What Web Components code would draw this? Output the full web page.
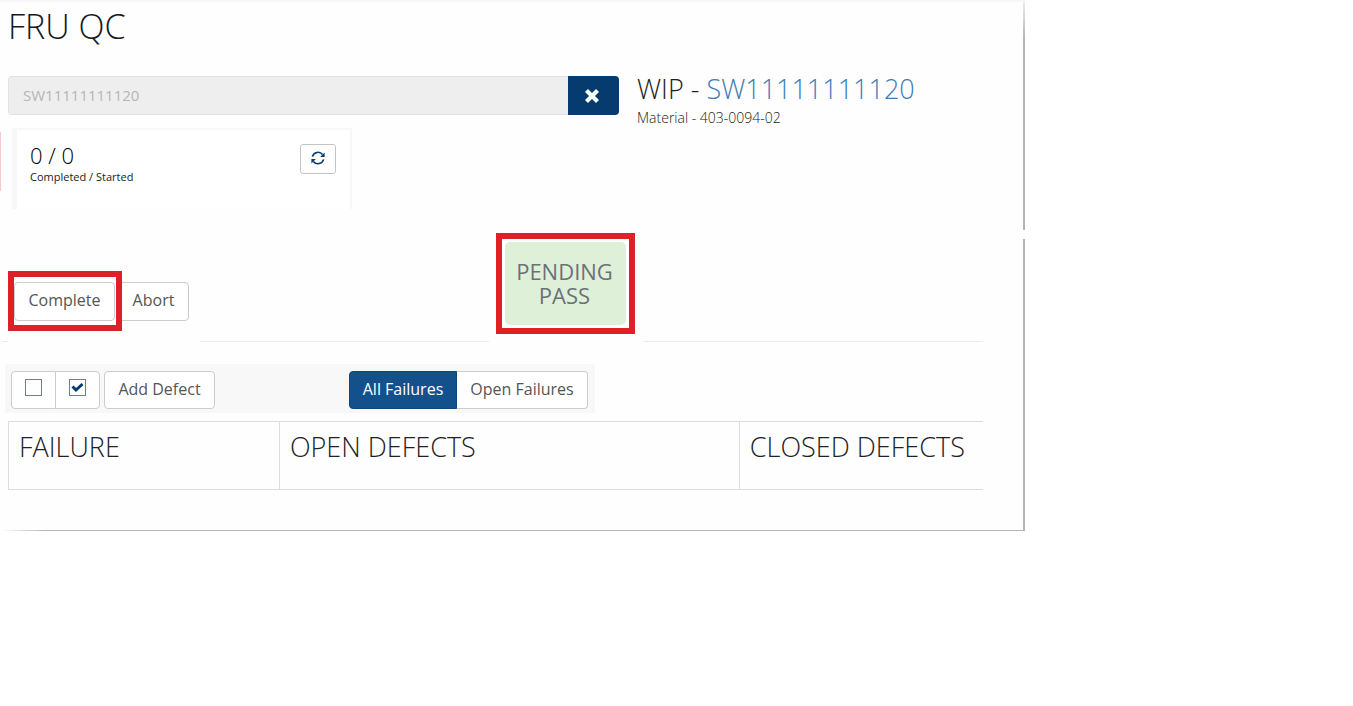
<!DOCTYPE html>
<html lang="en">
<head>
<meta charset="utf-8">
<meta name="viewport" content="width=device-width, initial-scale=1">
<title>FRU QC</title>
<style>
  body { margin: 0; background: #fff; color: #3a3f44; font-family: "Open Sans", "Noto Sans", sans-serif; }
</style>
</head>
<body>
<qc-panel heading="FRU QC">
  <qc-columns>
    <qc-lookup slot="main" value="SW11111111120"></qc-lookup>
    <qc-wip slot="side" serial="SW11111111120">Material - 403-0094-02</qc-wip>
  </qc-columns>
  <qc-progress count="0 / 0">Completed / Started</qc-progress>
  <qc-actions>
    <qc-button slot="first">Complete</qc-button>
    <qc-button slot="rest">Abort</qc-button>
    <qc-status slot="status">PENDING PASS</qc-status>
  </qc-actions>
  <qc-toolbar></qc-toolbar>
  <qc-table></qc-table>
</qc-panel>

<script>
const define = (name, html, setup) => {
  const template = document.createElement('template');
  template.innerHTML = '<style>*{box-sizing:border-box}</style>' + html;
  customElements.define(name, class extends HTMLElement {
    constructor() {
      super();
      this.attachShadow({ mode: 'open' }).append(template.content.cloneNode(true));
    }
    connectedCallback() { if (setup) setup(this, this.shadowRoot); }
  });
};

define('qc-panel', `
  <style>
    :host {
      display: block; box-sizing: border-box; max-width: 1025px; padding: 0 8px 41px;
      background:
        linear-gradient(#f6f6f6, #f6f6f6) 0 0 / 100% 2px no-repeat,
        linear-gradient(90deg, transparent, #b4b4b4 48px) 0 100% / 100% 1px no-repeat,
        linear-gradient(#eee, #b4b4b4 40px, #b4b4b4 230px, transparent 230px, transparent 239px, #b4b4b4 239px) 100% 0 / 2px 100% no-repeat,
        linear-gradient(#f8c9cd, #f8c9cd) 0 132px / 1px 59px no-repeat,
        #fefefe;
    }
    h1 { margin: 0; padding: 4px 0 27px; font-size: 34px; line-height: 45px; font-weight: 300; color: #14191e; }
  </style>
  <h1></h1>
  <slot></slot>`,
  (host, root) => { root.querySelector('h1').textContent = host.getAttribute('heading'); });

define('qc-columns', `
  <style>
    :host { display: grid; grid-template-columns: 611fr 380fr; column-gap: 18px; align-items: start; }
    ::slotted(*) { min-width: 0; }
  </style>
  <slot name="main"></slot><slot name="side"></slot>`);

define('qc-lookup', `
  <style>
    :host { display: flex; height: 39px; }
    input {
      flex: 1; min-width: 0; margin: 0; padding: 0 14px 1px; border: 1px solid #dfe3e5; border-width: 1px 0 1px 1px;
      border-radius: 4px 0 0 4px; background: #eee; color: #b4b6b8; font: 15px/20px "Open Sans", sans-serif;
    }
    button {
      display: grid; place-items: center; width: 51px; padding: 0 3px 0 0; border: 0;
      border-radius: 0 4px 4px 0; background: #063b70;
    }
    svg { width: 16px; height: 16px; }
  </style>
  <input type="text" aria-label="Serial number" disabled>
  <button type="button" aria-label="Clear">
    <svg viewBox="0 0 16 16"><path d="M2.5 2.5l11 11M13.5 2.5l-11 11" stroke="#fff" stroke-width="4.2"/></svg>
  </button>`,
  (host, root) => { root.querySelector('input').value = host.getAttribute('value'); });

define('qc-wip', `
  <style>
    :host { display: block; color: #222; font-size: 14px; font-weight: 300; line-height: 20px; }
    h2 { margin: 0; padding: 0 0 6px; font-size: 27px; line-height: 26px; font-weight: 300; color: #1c1c1c; }
    a { color: #3f7cb6; text-decoration: none; }
  </style>
  <h2>WIP - <a href="#wip"></a></h2>
  <slot></slot>`,
  (host, root) => { root.querySelector('a').textContent = host.getAttribute('serial'); });

define('qc-progress', `
  <style>
    :host {
      display: flex; justify-content: space-between; align-items: flex-start; box-sizing: border-box;
      width: 340px; max-width: 100%; height: 81px; margin: 0 0 24px 4px; padding: 14px 14px 0 13px;
      border: solid #f7f7f7; border-width: 2px 2px 0 5px; background: #fff; color: #222;
      font-size: 11px; line-height: 14px;
    }
    strong { display: block; margin-top: -4px; font-size: 22px; line-height: 30px; font-weight: 300; color: #000; }
    button {
      display: grid; place-items: center; width: 36px; height: 30px; padding: 0 0 3px; border: 1px solid #c4c4c4;
      border-radius: 3px; background: #fff;
    }
    svg { width: 14px; height: 14px; fill: none; stroke: #063b70; stroke-width: 1.6; }
    svg .tip { fill: #063b70; stroke: none; }
  </style>
  <div><strong></strong><slot></slot></div>
  <button type="button" aria-label="Refresh">
    <svg viewBox="0 0 14 14">
      <path d="M1.400 5.600A5.800 5.800 0 0 1 11.600 3.600M12.600 8.400A5.800 5.800 0 0 1 2.400 10.400"/>
      <path class="tip" d="M13.600 1.500v4.500H9.100zM.4 12.500V8h4.500z"/>
    </svg>
  </button>`,
  (host, root) => { root.querySelector('strong').textContent = host.getAttribute('count'); });

define('qc-button', `
  <style>
    :host { display: block; }
    button {
      display: block; width: 100%; height: 39px; padding: 0 10px 3px; border: 1px solid #ccc; border-radius: 4px;
      background: #fff; color: #555; font: 16px/20px "Open Sans", sans-serif; white-space: nowrap;
    }
  </style>
  <button type="button"><slot></slot></button>`);

define('qc-actions', `
  <style>
    .row { display: grid; grid-template-columns: 488fr 139px 348fr 34px; align-items: end; height: 100px; }
    :host { display: block; }
    .buttons { display: flex; align-items: center; padding-bottom: 3px; }
    .mark { position: relative; width: 114px; padding: 5px 1px 4px 0; border: 6px solid #dc2129; background: #fff; z-index: 1; }
    .abort { width: 71px; margin-left: -4px; }
    hr {
      height: 1px; margin: 8px 34px 22px -6px; border: 0;
      background: linear-gradient(90deg, #ebebeb 6px, transparent 6px, transparent 198px, #ebebeb 198px, #ebebeb 487px, transparent 487px, transparent 641px, #ebebeb 641px);
    }
  </style>
  <div class="row">
    <div class="buttons">
      <div class="mark"><slot name="first"></slot></div>
      <div class="abort"><slot name="rest"></slot></div>
    </div>
    <slot name="status"></slot>
  </div>
  <hr>`);

define('qc-status', `
  <style>
    :host { display: block; box-sizing: border-box; height: 101px; padding: 3px; border: 6px solid #dc2129; background: #fff; }
    div {
      display: grid; place-items: center; height: 83px; padding: 0 2px 2px 0; border-radius: 5px; background: #dff0d8;
      color: #6c7078; font-size: 22px; line-height: 24px; font-weight: 400; text-align: center;
    }
  </style>
  <div role="status"><slot></slot></div>`);

define('qc-toolbar', `
  <style>
    :host {
      display: flex; justify-content: space-between; align-items: center; box-sizing: border-box;
      width: 590px; max-width: 100%; height: 49px; margin: 0 0 8px -3px; padding: 2px 7px 0 6px; background: #f8f8f8;
    }
    div { display: flex; }
    .left { gap: 4px; }
    label, button {
      display: grid; place-items: center; height: 38px; padding: 0 10px 1px; border: 1px solid #ccc;
      border-radius: 4px; background: #fff; color: #555; font: 16px/20px "Open Sans", sans-serif; white-space: nowrap;
    }
    label { width: 45px; padding: 0 0 4px; }
    :is(label, button):first-child:not(:last-child) { border-radius: 4px 0 0 4px; }
    :is(label, button):last-child:not(:first-child) { border-radius: 0 4px 4px 0; }
    label + label { margin-left: -1px; }
    .left > button:last-child:last-child { width: 111px; border-radius: 4px; }
    .filter .on { width: 108px; border-color: #0d457f; background: #13508c; color: #fff; }
    .filter .off { width: 131px; border-left: 0; }
    input {
      appearance: none; width: 17px; height: 17px; margin: 0; border: 1px solid #6d7f8f; background: #fff no-repeat center;
    }
    input:checked {
      border-color: #4b88ab;
      background-image: url("data:image/svg+xml,%3Csvg xmlns='http://www.w3.org/2000/svg' width='15' height='15'%3E%3Cpath d='M2.500 6.500L6 10l6.500-6' fill='none' stroke='%23063b70' stroke-width='3'/%3E%3C/svg%3E");
    }
  </style>
  <div class="left">
    <div>
      <label><input type="checkbox" aria-label="Clear selection"></label>
      <label><input type="checkbox" aria-label="Select all" checked></label>
    </div>
    <button type="button">Add Defect</button>
  </div>
  <div class="filter">
    <button type="button" class="on">All Failures</button>
    <button type="button" class="off">Open Failures</button>
  </div>`);

define('qc-table', `
  <style>
    :host { display: block; margin-right: 34px; }
    table { width: 100%; border-collapse: collapse; table-layout: fixed; }
    th {
      height: 68px; padding: 7px 10px; border: 1px solid #ddd; border-right: 0; vertical-align: top; text-align: left;
      font-size: 27px; line-height: 36px; font-weight: 300; color: #1d2227; white-space: nowrap;
    }
    th:nth-child(1) { width: 27.800%; }
    th:nth-child(2) { width: 47.200%; }
  </style>
  <table>
    <thead><tr><th scope="col">FAILURE</th><th scope="col">OPEN DEFECTS</th><th scope="col">CLOSED DEFECTS</th></tr></thead>
  </table>`);
</script>
</body>
</html>
